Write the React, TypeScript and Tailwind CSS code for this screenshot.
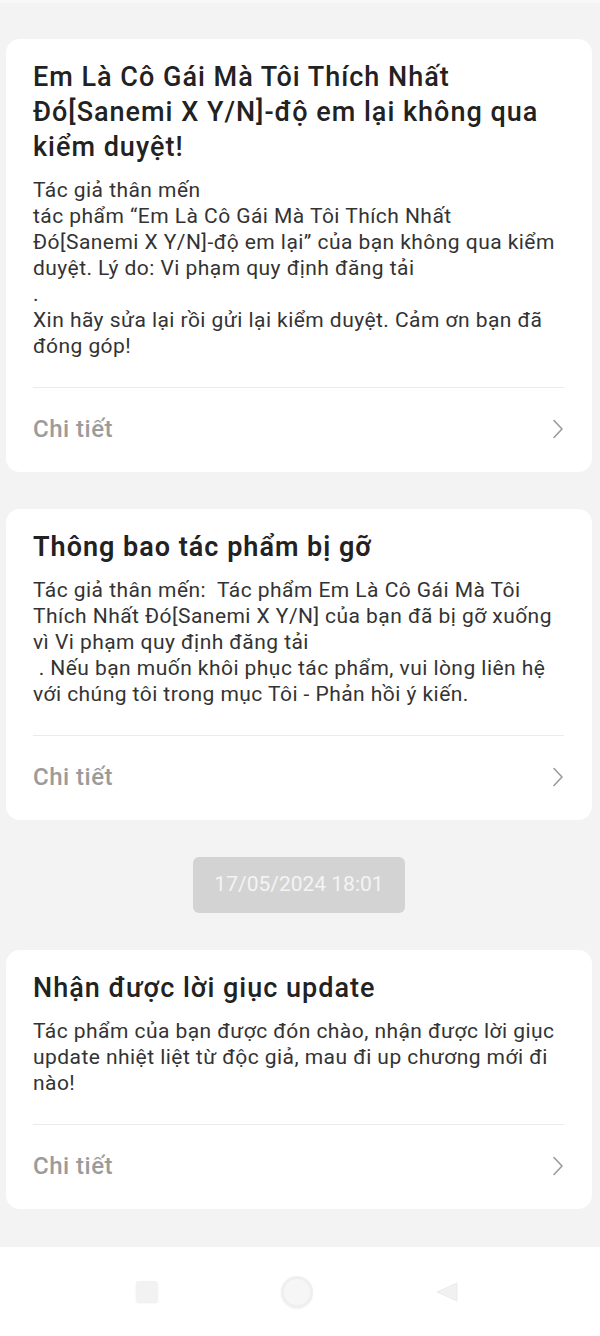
const cards = [
  {
    title: ["Em Là Cô Gái Mà Tôi Thích Nhất", "Đó[Sanemi X Y/N]-độ em lại không qua", "kiểm duyệt!"],
    body: [
      "Tác giả thân mến",
      "tác phẩm “Em Là Cô Gái Mà Tôi Thích Nhất",
      "Đó[Sanemi X Y/N]-độ em lại” của bạn không qua kiểm",
      "duyệt. Lý do: Vi phạm quy định đăng tải",
      ".",
      "Xin hãy sửa lại rồi gửi lại kiểm duyệt. Cảm ơn bạn đã",
      "đóng góp!",
    ],
    bold: false,
  },
  {
    title: ["Thông bao tác phẩm bị gỡ"],
    body: [
      "Tác giả thân mến:  Tác phẩm Em Là Cô Gái Mà Tôi",
      "Thích Nhất Đó[Sanemi X Y/N] của bạn đã bị gỡ xuống",
      "vì Vi phạm quy định đăng tải",
      " . Nếu bạn muốn khôi phục tác phẩm, vui lòng liên hệ",
      "với chúng tôi trong mục Tôi - Phản hồi ý kiến.",
    ],
    bold: true,
  },
]

const last = {
  title: ["Nhận được lời giục update"],
  body: [
    "Tác phẩm của bạn được đón chào, nhận được lời giục",
    "update nhiệt liệt từ độc giả, mau đi up chương mới đi",
    "nào!",
  ],
  bold: false,
}

function Chevron() {
  return (
    <svg width="12" height="20" viewBox="0 0 12 20" fill="none">
      <path d="M2 1.5 L10 10 L2 18.5" stroke="#9a9a9a" strokeWidth="1.6" strokeLinecap="round" strokeLinejoin="round" />
    </svg>
  )
}

function Card({ title, body, bold }: { title: string[]; body: string[]; bold: boolean }) {
  return (
    <div className="bg-white rounded-[14px] pl-[27px] pr-[28px] pt-[21px]">
      <h2 className={`text-[27px] leading-[35px] tracking-[1px] text-[#222] ${bold ? "font-semibold" : "font-medium"}`}>
        {title.map((t) => (
          <div key={t}>{t}</div>
        ))}
      </h2>
      <div className="mt-[12px] text-[21px] leading-[26px] tracking-[0.45px] text-[#333] whitespace-pre">
        {body.map((t, i) => (
          <div key={i}>{t}</div>
        ))}
      </div>
      <div className="mt-[28px] h-px bg-[#ebebeb]" />
      <div className="h-[84px] flex items-center justify-between pb-[3px]">
        <span className="text-[24px] tracking-[0.5px] font-medium text-[#9b9b9b]">Chi tiết</span>
        <Chevron />
      </div>
    </div>
  )
}

export default function App() {
  return (
    <div className="h-[1336px] bg-[#f3f3f3] flex flex-col font-['Roboto','Liberation_Sans',sans-serif]">
      <div className="h-[3px] bg-[#f8f8f8]" />
      <main className="flex-1 pt-[36px] pl-[6px] pr-[8px] flex flex-col gap-[37px]">
        {cards.map((c, i) => (
          <Card key={i} {...c} />
        ))}
        <div className="flex justify-center">
          <div className="h-[56px] px-[21px] rounded-[6px] bg-[#d3d3d3] flex items-center text-[21px] text-[#f4f4f4]">
            17/05/2024 18:01
          </div>
        </div>
        <Card {...last} />
      </main>
      <nav className="h-[89px] bg-white flex items-center justify-center gap-[123px] pr-[6px]">
        <div className="w-[22px] h-[21px] rounded-[2px] bg-[#f2f2f2] shadow-[0_1px_2px_rgba(0,0,0,0.08)]" />
        <div className="w-[32px] h-[32px] rounded-full border-[3px] border-[#efefef] bg-[#f6f6f6] shadow-[0_1px_2px_rgba(0,0,0,0.06)]" />
        <svg width="22" height="22" viewBox="0 0 22 22">
          <path d="M21 2 L21 20 L1 11 Z" fill="#f1f1f1" stroke="#ebebeb" strokeWidth="1" strokeLinejoin="round" />
        </svg>
      </nav>
    </div>
  )
}
